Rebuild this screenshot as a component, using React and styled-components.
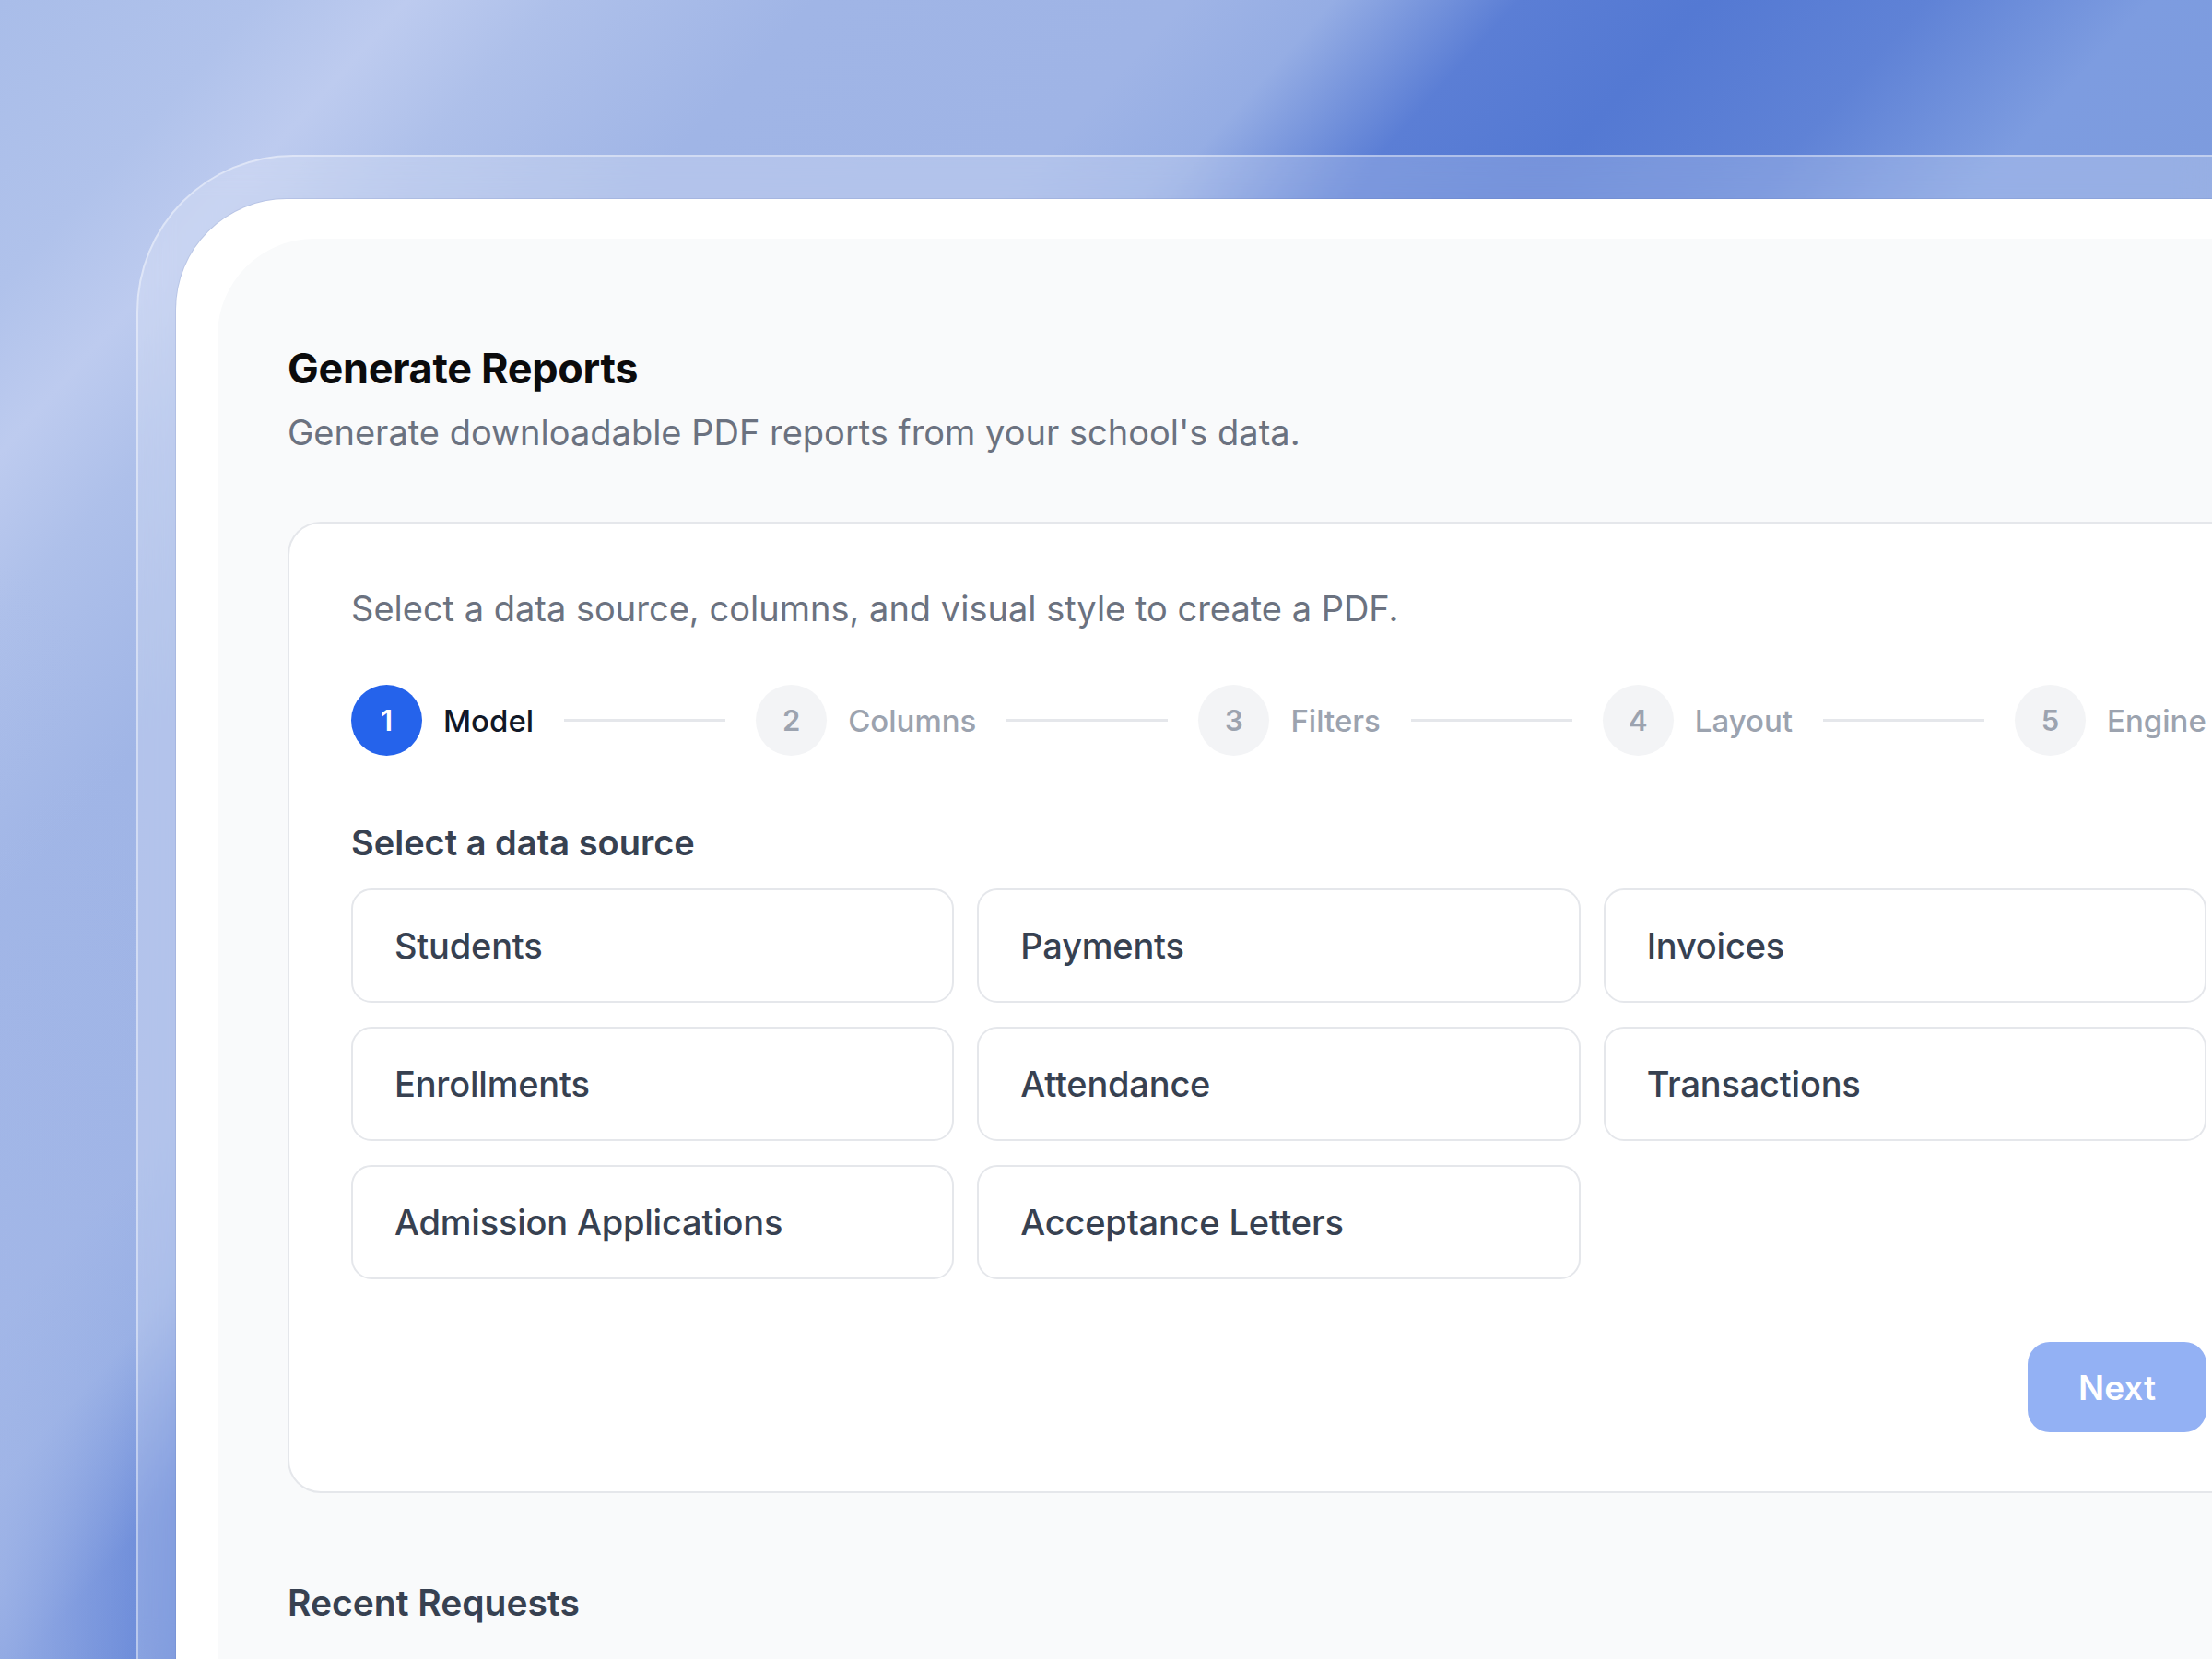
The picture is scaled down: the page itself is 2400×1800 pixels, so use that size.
import React from "react";
import styled, { createGlobalStyle } from "styled-components";

const Global = createGlobalStyle`
  html, body {
    margin: 0;
    padding: 0;
    width: 2400px;
    height: 1800px;
    overflow: hidden;
  }
  body {
    font-family: Inter, "Noto Sans", "Liberation Sans", sans-serif;
    -webkit-font-smoothing: antialiased;
  }
  *, *::before, *::after { box-sizing: border-box; }
`;

const Scene = styled.div`
  width: 2400px;
  height: 1800px;
  overflow: hidden;
  padding: 168px 0 0 148px;
  background:
    radial-gradient(ellipse 240px 1100px at 0% 95%, rgba(164, 184, 232, 0.8), rgba(164, 184, 232, 0) 100%),
    linear-gradient(132deg,
      #a9bde9 0%,
      #b0c2eb 7%,
      #bdcbef 11%,
      #aec0ea 15%,
      #a0b5e6 22%,
      #9fb4e6 32%,
      #95ade4 36%,
      #5b7ed5 41%,
      #5479d3 46%,
      #5f82d6 52%,
      #7d9ce0 58%,
      #7d9bdd 66%,
      #7896da 100%);
`;

const Glass = styled.div`
  width: 2700px;
  height: 1900px;
  padding: 46px 0 0 41px;
  border-top-left-radius: 170px;
  background: rgba(255, 255, 255, 0.2);
  border-top: 2px solid rgba(255, 255, 255, 0.4);
  border-left: 2px solid rgba(255, 255, 255, 0.4);
  backdrop-filter: blur(18px);
`;

const Window = styled.div`
  height: 100%;
  background: #ffffff;
  border-top-left-radius: 120px;
  padding: 43px 0 0 45px;
  box-shadow: 0 0 0 1px rgba(70, 90, 150, 0.12);
`;

const Page = styled.main`
  height: 100%;
  background: #f9fafb;
  border-top-left-radius: 105px;
  padding: 116px 0 0 76px;
`;

const Content = styled.div`
  width: 2152px;
  display: flex;
  flex-direction: column;
`;

const Title = styled.h1`
  margin: 0;
  font-size: 45px;
  line-height: 50px;
  font-weight: 700;
  color: #0b0b0c;
  letter-spacing: -0.3px;
`;

const Subtitle = styled.p`
  margin: 18px 0 0;
  font-size: 38px;
  line-height: 52px;
  font-weight: 400;
  color: #6b7280;
`;

const Card = styled.section`
  margin-top: 71px;
  background: #ffffff;
  border: 2px solid #e5e7eb;
  border-radius: 36px;
  padding: 66px 68px 64px 67px;
  display: flex;
  flex-direction: column;
`;

const Intro = styled.p`
  margin: 0;
  font-size: 38px;
  line-height: 52px;
  color: #6b7280;
`;

const Stepper = styled.ol`
  margin: 57px 0 0;
  padding: 0;
  list-style: none;
  display: flex;
  align-items: center;
  height: 77px;
  white-space: nowrap;
`;

const Step = styled.li`
  display: flex;
  align-items: center;
  flex: none;
`;

const StepCircle = styled.span`
  width: 77px;
  height: 77px;
  border-radius: 50%;
  display: flex;
  align-items: center;
  justify-content: center;
  flex: none;
  font-size: 31px;
  font-weight: 600;
  background: ${(p) => (p.$active ? "#2563eb" : "#f3f4f6")};
  color: ${(p) => (p.$active ? "#ffffff" : "#9ca3af")};
`;

const StepLabel = styled.span`
  margin-left: 23px;
  font-size: 33px;
  font-weight: 500;
  color: ${(p) => (p.$active ? "#111827" : "#9ca3af")};
`;

const Connector = styled.span`
  width: 175px;
  height: 3px;
  margin: 0 33px;
  background: #e5e7eb;
  flex: none;
`;

const SectionTitle = styled.h2`
  margin: 69px 0 0;
  font-size: 38px;
  line-height: 50px;
  font-weight: 600;
  color: #374151;
`;

const OptionGrid = styled.div`
  margin-top: 25px;
  display: grid;
  grid-template-columns: repeat(3, 1fr);
  column-gap: 25px;
  row-gap: 26px;
`;

const Option = styled.button`
  height: 124px;
  background: #ffffff;
  border: 2px solid #e5e7eb;
  border-radius: 22px;
  padding: 0 45px;
  display: flex;
  align-items: center;
  text-align: left;
  font-family: inherit;
  font-size: 38px;
  font-weight: 500;
  letter-spacing: -0.2px;
  color: #374151;
  cursor: pointer;
`;

const Footer = styled.div`
  margin-top: 68px;
  display: flex;
  justify-content: flex-end;
`;

const NextButton = styled.button`
  height: 98px;
  padding: 0 55px;
  border: none;
  border-radius: 24px;
  background: #93b1f4;
  color: #ffffff;
  font-family: inherit;
  font-size: 37px;
  font-weight: 600;
  cursor: not-allowed;
`;

const RecentTitle = styled.h2`
  margin: 94px 0 0;
  font-size: 39px;
  line-height: 50px;
  font-weight: 600;
  color: #374151;
`;

const steps = ["Model", "Columns", "Filters", "Layout", "Engine"];
const sources = [
  "Students",
  "Payments",
  "Invoices",
  "Enrollments",
  "Attendance",
  "Transactions",
  "Admission Applications",
  "Acceptance Letters",
];

export default function App() {
  return (
    <>
      <Global />
      <Scene>
        <Glass>
          <Window>
            <Page>
              <Content>
                <Title>Generate Reports</Title>
                <Subtitle>Generate downloadable PDF reports from your school's data.</Subtitle>
                <Card>
                  <Intro>Select a data source, columns, and visual style to create a PDF.</Intro>
                  <Stepper>
                    {steps.map((s, i) => (
                      <React.Fragment key={s}>
                        <Step>
                          <StepCircle $active={i === 0}>{i + 1}</StepCircle>
                          <StepLabel $active={i === 0}>{s}</StepLabel>
                        </Step>
                        {i < steps.length - 1 && <Connector />}
                      </React.Fragment>
                    ))}
                  </Stepper>
                  <SectionTitle>Select a data source</SectionTitle>
                  <OptionGrid>
                    {sources.map((s) => (
                      <Option key={s} type="button">{s}</Option>
                    ))}
                  </OptionGrid>
                  <Footer>
                    <NextButton type="button" disabled>Next</NextButton>
                  </Footer>
                </Card>
                <RecentTitle>Recent Requests</RecentTitle>
              </Content>
            </Page>
          </Window>
        </Glass>
      </Scene>
    </>
  );
}
